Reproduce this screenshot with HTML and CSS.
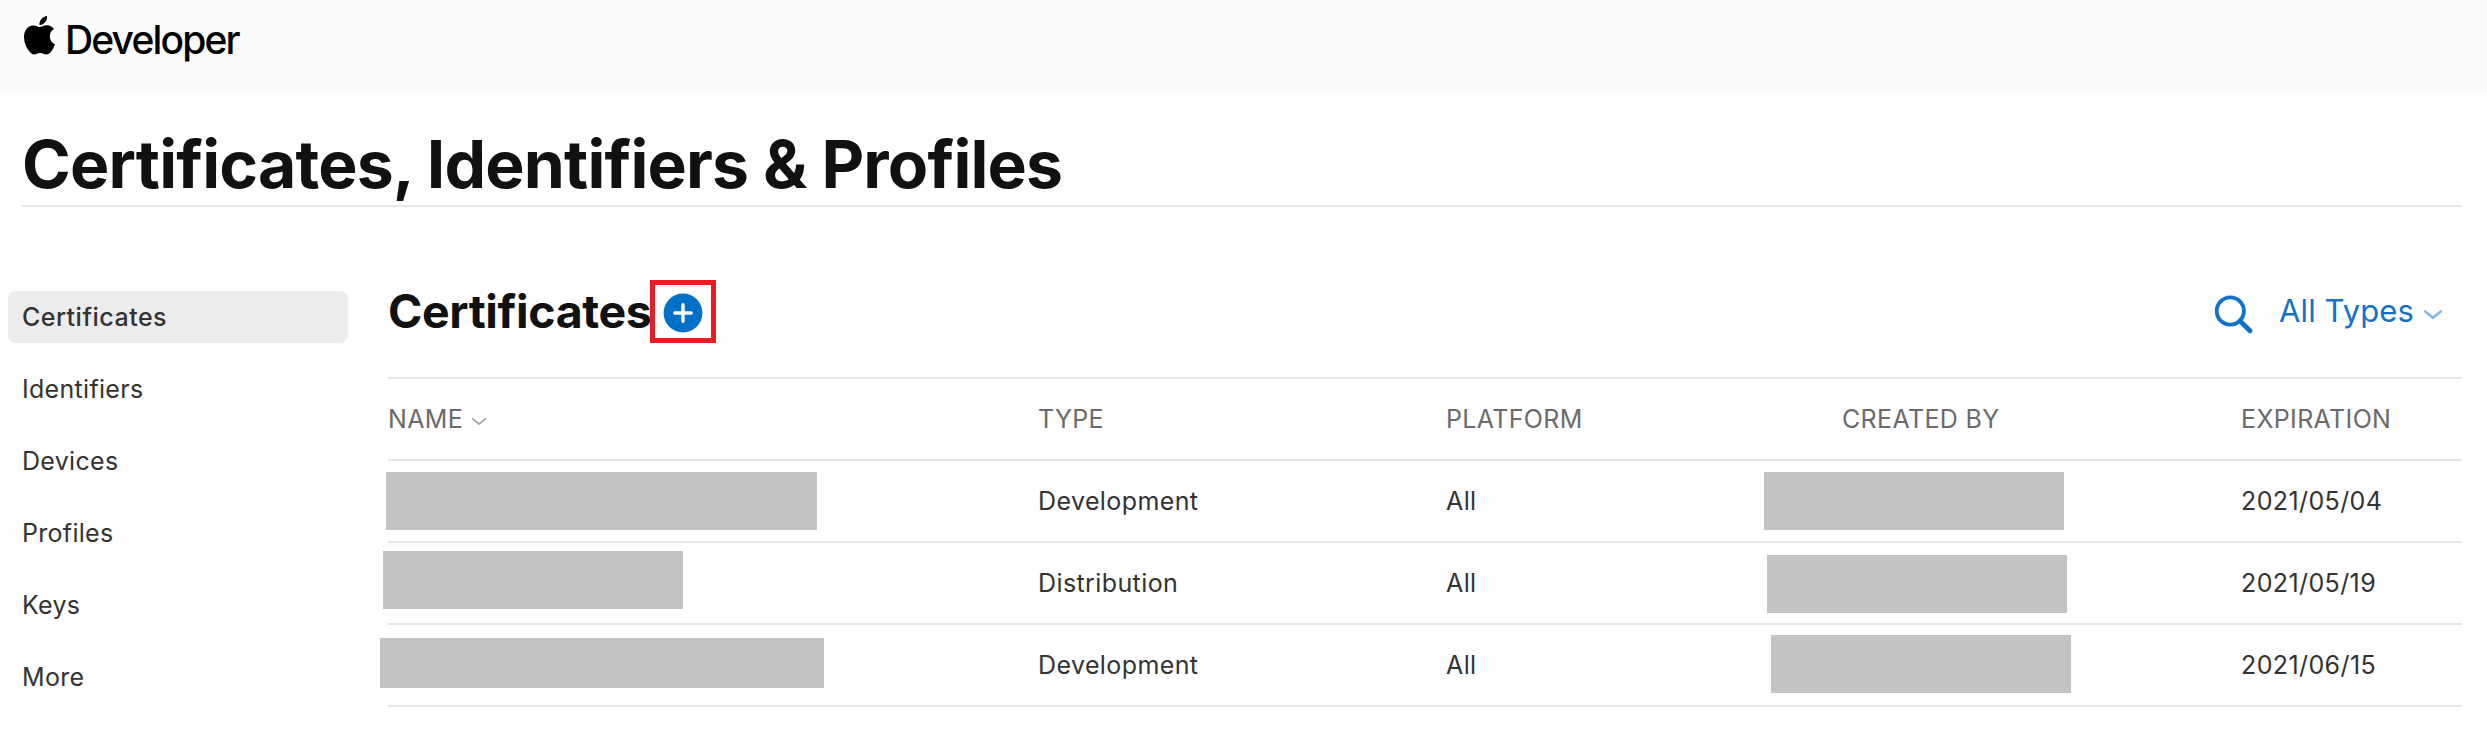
FILE: index.html
```html
<!DOCTYPE html>
<html lang="en">
<head>
<meta charset="utf-8">
<title>Certificates, Identifiers &amp; Profiles - Apple Developer</title>
<link rel="stylesheet" href="styles.css">
</head>
<body>
<header class="topbar">
  <a class="brand">
    <svg class="brand-logo" viewBox="2.23 0 19.55 24" preserveAspectRatio="none" aria-hidden="true"><path d="M12.152 6.896c-.948 0-2.415-1.078-3.96-1.04-2.04.027-3.91 1.183-4.961 3.014-2.117 3.675-.546 9.103 1.519 12.09 1.013 1.454 2.208 3.09 3.792 3.039 1.52-.065 2.09-.987 3.935-.987 1.831 0 2.35.987 3.96.948 1.637-.026 2.676-1.48 3.676-2.948 1.156-1.688 1.636-3.325 1.662-3.415-.039-.013-3.182-1.221-3.22-4.857-.026-3.04 2.48-4.494 2.597-4.559-1.429-2.09-3.623-2.324-4.39-2.376-2-.156-3.675 1.09-4.61 1.09zM15.53 3.83c.843-1.012 1.4-2.427 1.245-3.83-1.207.052-2.662.805-3.532 1.818-.78.896-1.454 2.338-1.273 3.714 1.338.104 2.715-.688 3.559-1.701"/></svg>
    <span class="brand-name">Developer</span>
  </a>
</header>
<h1 class="page-title">Certificates, Identifiers &amp; Profiles</h1>
<div class="layout">
  <nav class="sidebar">
    <a class="nav-item nav-item-active">Certificates</a>
    <a class="nav-item">Identifiers</a>
    <a class="nav-item">Devices</a>
    <a class="nav-item">Profiles</a>
    <a class="nav-item">Keys</a>
    <a class="nav-item">More</a>
  </nav>
  <main class="content">
    <div class="section-head">
      <h2 class="section-title">Certificates</h2>
      <span class="highlight">
        <svg class="add-icon" viewBox="0 0 40 40" role="img" aria-label="Add"><circle cx="20" cy="20" r="19.4"/><path d="M11.8 20h16.4M20 11.8v16.4"/></svg>
      </span>
      <div class="filters">
        <svg class="search-icon" viewBox="0 0 40 40" role="img" aria-label="Search"><circle cx="16.3" cy="16" r="13.6"/><path class="search-handle" d="M26 26l10 9.7"/></svg>
        <span class="filter-label">All Types</span>
        <svg class="filter-chevron" viewBox="0 0 18 10" aria-hidden="true"><path d="M1.2 1.5L9 7.8l7.800-6.300"/></svg>
      </div>
    </div>
    <div class="table">
      <div class="row row-head">
        <span>NAME<svg class="sort-chevron" viewBox="0 0 14 8" aria-hidden="true"><path d="M.8 1L7 6l6.200-5"/></svg></span>
        <span>TYPE</span><span>PLATFORM</span><span>CREATED BY</span><span>EXPIRATION</span>
      </div>
      <div class="row">
        <span class="redacted name-1"></span><span>Development</span><span>All</span><span class="redacted owner-1"></span><span>2021/05/04</span>
      </div>
      <div class="row">
        <span class="redacted name-2"></span><span>Distribution</span><span>All</span><span class="redacted owner-2"></span><span>2021/05/19</span>
      </div>
      <div class="row">
        <span class="redacted name-3"></span><span>Development</span><span>All</span><span class="redacted owner-3"></span><span>2021/06/15</span>
      </div>
    </div>
  </main>
</div>
</body>
</html>
```
FILE: styles.css
```css
* { box-sizing: border-box; }
body {
  margin: 0;
  background: #fefefe;
  color: #333;
  font-family: Inter, "Liberation Sans", sans-serif;
  font-size: 25px;
  letter-spacing: 0.4px;
}
svg { display: block; fill: none; stroke-linecap: round; }

.topbar { height: 93px; padding-left: 24px; background: #fafafa; }
.brand { display: flex; align-items: flex-start; gap: 10px; color: #000; }
.brand-logo { width: 31px; height: 38.500px; margin-top: 16px; fill: #000; }
.brand-name { font-size: 39px; font-weight: 500; line-height: 80px; letter-spacing: -1.850px; }

.page-title {
  margin: 0 25px 0 22px;
  padding: 31px 0 1px;
  border-bottom: 2px solid #e4e4e4;
  color: #111;
  font-size: 66px;
  font-weight: 700;
  line-height: 80px;
  letter-spacing: -0.820px;
}

.layout { display: grid; grid-template-columns: 340px 2074px; gap: 40px; padding-left: 8px; }
.sidebar { display: flex; flex-direction: column; gap: 20px; padding-top: 84px; }
.nav-item { height: 52px; padding-left: 14px; border-radius: 8px; line-height: 52px; letter-spacing: 0.300px; }
.nav-item-active { background: #ececec; font-weight: 500; letter-spacing: 0.500px; }

.content { padding-top: 67px; }
.section-head { display: flex; align-items: center; height: 74px; margin-bottom: 29px; }
.section-title { width: 262px; margin: 0; color: #111; font-size: 46.500px; font-weight: 700; line-height: 74px; letter-spacing: -0.400px; }
.highlight {
  display: flex;
  align-items: center;
  justify-content: center;
  width: 66px;
  height: 63px;
  margin-top: 1px;
  border: 5px solid #ed1c24;
}
.add-icon { width: 40px; height: 40px; margin: 2px 0 0; }
.add-icon circle { fill: #0070c9; }
.add-icon path { stroke: #fff; stroke-width: 3.400; }
.filters { display: flex; align-items: center; margin-left: auto; padding-right: 20px; color: #1271c9; }
.search-icon { width: 40px; height: 40px; margin: 7px 25.500px 0 0; stroke: currentColor; stroke-width: 3.800; }
.search-handle { stroke-width: 5; }
.filter-label { font-size: 31px; line-height: 74px; letter-spacing: 0.100px; }
.filter-chevron { width: 18px; height: 10px; margin: 7px 0 0 10px; stroke: #84b8e4; stroke-width: 2.600; }

.table { border-top: 2px solid #e4e4e4; }
.row {
  display: grid;
  grid-template-columns: 650px 408px 396px 399px 221px;
  align-items: center;
  height: 82px;
  border-bottom: 2px solid #e4e4e4;
}
.row-head { color: #6b6b6b; letter-spacing: 0.350px; }
.row-head span { display: flex; align-items: center; }
.sort-chevron { width: 14px; height: 8px; margin: 5px 0 0 9px; stroke: #aaa; stroke-width: 2; }

/* Blanked-out values */
.redacted { align-self: start; height: 58px; background: #c3c3c3; }
.name-1 { width: 431px; margin: 11px 0 0 -2px; }
.name-2 { width: 300px; margin: 8px 0 0 -5px; }
.name-3 { width: 444px; height: 50px; margin: 13px 0 0 -8px; }
.owner-1 { width: 300px; margin: 11px 0 0 -78px; }
.owner-2 { width: 300px; margin: 12px 0 0 -75px; }
.owner-3 { width: 300px; margin: 10px 0 0 -71px; }
```
